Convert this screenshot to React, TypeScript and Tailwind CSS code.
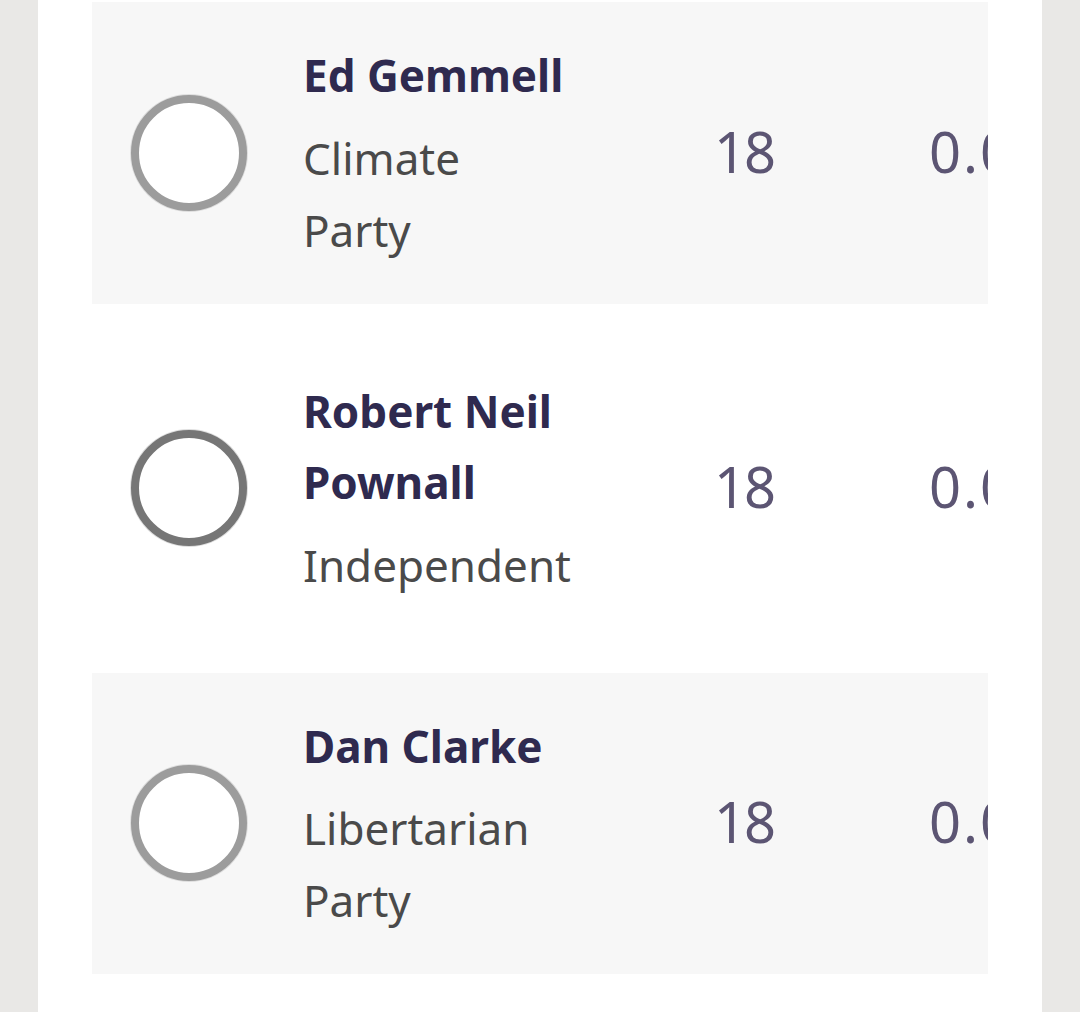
import React from 'react';

interface Candidate {
  name: string;
  party: string;
  votes: string;
  share: string;
  dark?: boolean;
}

const candidates: Candidate[] = [
  { name: 'Ed Gemmell', party: 'Climate Party', votes: '18', share: '0.05%' },
  { name: 'Robert Neil Pownall', party: 'Independent', votes: '18', share: '0.05%', dark: true },
  { name: 'Dan Clarke', party: 'Libertarian Party', votes: '18', share: '0.05%' },
];

const App: React.FC = () => {
  return (
    <div
      className="w-full h-[1012px] bg-[#e9e8e6] px-[38px] overflow-hidden"
      style={{ fontFamily: '"Noto Sans", "Open Sans", sans-serif' }}
    >
      <div className="h-full bg-white px-[54px] pt-[2px]">
        {candidates.map((c, i) => (
          <div
            key={i}
            className={`flex items-center overflow-hidden ${
              i % 2 === 0 ? 'bg-[#f7f7f7] py-[38px]' : 'bg-white py-[72px]'
            }`}
          >
            {/* radio */}
            <div
              className={`ml-[39px] w-[116px] h-[116px] shrink-0 rounded-full bg-white border-[8px] shadow-[0_0_0_1px_#dedede] ${
                c.dark ? 'border-[#767676]' : 'border-[#9c9c9c]'
              }`}
            />
            <div className="ml-[56px] w-[411px] shrink-0">
              <div className="w-[268px]">
                <div className="text-[44px] leading-[71.5px] font-bold text-[#2f2a4f]">{c.name}</div>
                <div className="mt-[10px] text-[44px] leading-[72px] text-[#4a4a4a]">{c.party}</div>
              </div>
            </div>
            <div className="w-[215px] shrink-0 -mt-[4px] text-[56px] leading-none text-[#5c5573] tracking-[-2px]">
              {c.votes}
            </div>
            <div className="shrink-0 -mt-[4px] text-[56px] leading-none text-[#5c5573] whitespace-nowrap tracking-[2px]">
              {c.share}
            </div>
          </div>
        ))}
      </div>
    </div>
  );
};

export default App;
